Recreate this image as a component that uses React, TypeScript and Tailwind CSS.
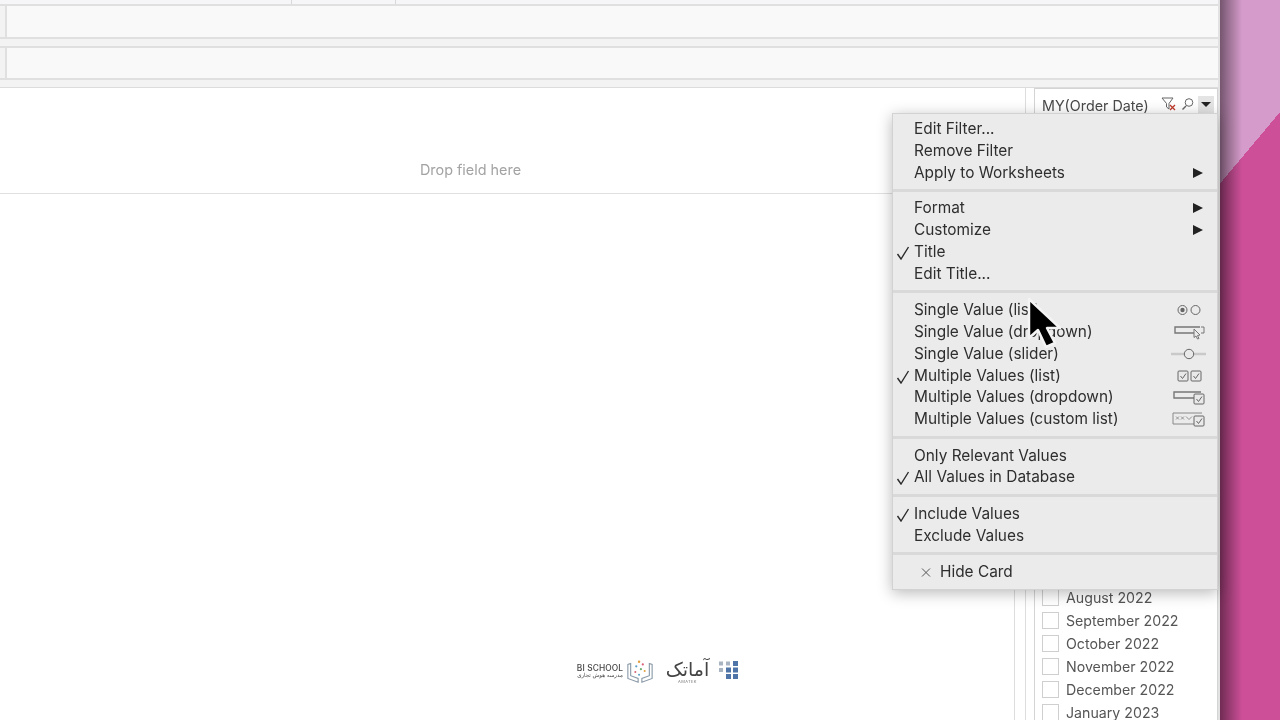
import type { ReactNode } from 'react'

const months = ['August 2022', 'September 2022', 'October 2022', 'November 2022', 'December 2022', 'January 2023']

function Box({ x, y, s = 10 }: { x: number; y: number; s?: number }) {
  return (
    <g>
      <rect x={x} y={y} width={s} height={s} rx="1" fill="#e9e9e9" stroke="#666" />
      <path d={`M${x + 2.5} ${y + s / 2}l2 2.5 3.5-5`} fill="none" stroke="#666" />
    </g>
  )
}

function ModeIcon({ kind }: { kind: string }) {
  return (
    <svg width="36" height="18" viewBox="0 0 36 18" className="absolute right-[10px] top-[2px]">
      {kind === 'radio' && (
        <g fill="none" stroke="#666">
          <circle cx="11.5" cy="9" r="4.5" />
          <circle cx="11.5" cy="9" r="2.2" fill="#666" stroke="none" />
          <circle cx="24.5" cy="9" r="4.5" />
        </g>
      )}
      {kind === 'drop' && (
        <g fill="none" stroke="#777">
          <path d="M29 4H4v6h20" strokeWidth="1.4" />
          <path d="M30 4h3v6h-3" />
          <path d="M23 6l6 6-2.5.5 1.5 3-1.5.5-1.5-3-2 1.5z" fill="#e9e9e9" />
        </g>
      )}
      {kind === 'slider' && (
        <g>
          <path d="M0 9h35" stroke="#c9c9c9" strokeWidth="2.5" />
          <circle cx="18" cy="9" r="4.7" fill="#e9e9e9" stroke="#666" />
        </g>
      )}
      {kind === 'checks' && (
        <g>
          <Box x={7} y={4} />
          <Box x={20} y={4} />
        </g>
      )}
      {kind === 'dropcheck' && (
        <g>
          <path d="M30 4H3v6h20" fill="none" stroke="#777" strokeWidth="1.4" />
          <Box x={23} y={6} />
        </g>
      )}
      {kind === 'custom' && (
        <g>
          <path d="M31 3H2v11h21" fill="none" stroke="#888" />
          <path d="M5 6.5l3 3m0-3l-3 3M10 6.5l3 3m0-3l-3 3M15 6.5l3 3 3-3" fill="none" stroke="#888" strokeWidth=".9" />
          <Box x={23} y={6} />
        </g>
      )}
    </svg>
  )
}

function Row({ label, check, arrow, mode }: { label: string; check?: boolean; arrow?: boolean; mode?: string }) {
  return (
    <div className="relative h-[21.8px] pl-[21px] leading-[21.8px] whitespace-nowrap">
      {check && (
        <svg width="14" height="14" viewBox="0 0 14 14" className="absolute left-[3px] top-[5px]">
          <path d="M1.5 8l3.5 5L12.5 1" fill="none" stroke="#2b2b2b" strokeWidth="1.4" />
        </svg>
      )}
      {label}
      {arrow && (
        <svg width="10" height="10" viewBox="0 0 10 10" className="absolute right-[14px] top-[6px]">
          <path d="M0 0l10 5-10 5z" fill="#222" />
        </svg>
      )}
      {mode && <ModeIcon kind={mode} />}
    </div>
  )
}

function Group({ children }: { children: ReactNode }) {
  return (
    <div className="border-b-[3px] border-[#d9d9d9] py-[5.8px] first:pt-[4.1px] first:pb-[5.1px] last:border-b-0 last:pb-[6px]">
      {children}
    </div>
  )
}

function Shelf({ className }: { className: string }) {
  return (
    <div className={`flex border-y-2 border-[#e0e0e0] bg-[#f9f9f9] ${className}`}>
      <div className="w-[7px] border-r-2 border-[#e0e0e0] bg-[#f3f3f3]" />
    </div>
  )
}

export default function App() {
  return (
    <div className="relative flex h-[720px] w-[1280px] overflow-hidden bg-white font-['Inter',sans-serif] blur-[0.35px]">
      {/* app window */}
      <div className="flex w-[1220px] flex-col border-r-2 border-[#e2e2e2] bg-[#f3f3f3]">
        <div className="flex h-[4px] bg-[#f6f6f8]">
          <div className="w-[292px] border-r border-[#d8d8d8]" />
          <div className="w-[104px] border-r border-[#d8d8d8]" />
        </div>
        <Shelf className="h-[35px]" />
        <div className="h-[7px]" />
        <Shelf className="h-[34px]" />
        <div className="h-[7px]" />

        <div className="flex min-h-0 flex-1 border-t border-[#dcdcdc] bg-white">
          <div className="flex w-[1026px] flex-col border-r border-[#dddddd]">
            <div className="flex h-[106px] shrink-0 items-center justify-center border-b border-[#e0e0e0] pt-[58px] pr-[84px] text-[14.4px] text-[#a3a3a3]">
              Drop field here
            </div>
            <div className="w-[1015px] flex-1 border-r border-[#dddddd]" />
          </div>

          <div className="ml-[8px] w-[184px] border-x border-t border-[#d4d4d4] pl-[7px] text-[#555]">
            <div className="flex h-[34px] items-center text-[14.3px] text-[#4a4a4a]">MY(Order Date)</div>
            <div className="mt-[463px] flex flex-col">
              {months.map((m) => (
                <div key={m} className="flex h-[23px] items-center gap-[7px] text-[14.2px] whitespace-nowrap">
                  <div className="h-[17px] w-[17px] shrink-0 border border-[#cfcfcf] bg-white" />
                  {m}
                </div>
              ))}
            </div>
          </div>
        </div>
      </div>

      {/* desktop wallpaper */}
      <div className="relative flex-1 bg-[linear-gradient(130deg,#d59bca_118px,#cc4f98_118px)]">
        <div className="h-full w-[22px] bg-gradient-to-r from-black/45 to-transparent" />
      </div>

      {/* card header icons */}
      <svg width="60" height="18" viewBox="0 0 60 18" className="absolute left-[1160px] top-[96px]">
        <path d="M2 2h11L9 7.5V13L6.5 11V7.5z" fill="none" stroke="#666" />
        <path d="M10 9l5 5m0-5l-5 5" stroke="#c0392b" strokeWidth="1.3" />
        <circle cx="29" cy="6.5" r="3.8" fill="none" stroke="#666" />
        <path d="M26 10l-3.5 3.5" stroke="#666" strokeWidth="1.4" />
      </svg>
      <div className="absolute left-[1198px] top-[96px] flex h-[17px] w-[16px] items-center justify-center bg-[#e4e4e4]">
        <div className="h-0 w-0 border-x-[5px] border-t-[5px] border-x-transparent border-t-[#222]" />
      </div>

      {/* filter card menu */}
      <div className="absolute left-[892px] top-[113px] w-[326px] border border-[#d2d2d2] bg-[#ebebeb] text-[15.4px] text-[#2e2e2e] shadow-[0_3px_14px_rgba(0,0,0,0.28)]">
        <Group>
          <Row label="Edit Filter..." />
          <Row label="Remove Filter" />
          <Row label="Apply to Worksheets" arrow />
        </Group>
        <Group>
          <Row label="Format" arrow />
          <Row label="Customize" arrow />
          <Row label="Title" check />
          <Row label="Edit Title..." />
        </Group>
        <Group>
          <Row label="Single Value (list)" mode="radio" />
          <Row label="Single Value (dropdown)" mode="drop" />
          <Row label="Single Value (slider)" mode="slider" />
          <Row label="Multiple Values (list)" check mode="checks" />
          <Row label="Multiple Values (dropdown)" mode="dropcheck" />
          <Row label="Multiple Values (custom list)" mode="custom" />
        </Group>
        <Group>
          <Row label="Only Relevant Values" />
          <Row label="All Values in Database" check />
        </Group>
        <Group>
          <Row label="Include Values" check />
          <Row label="Exclude Values" />
        </Group>
        <Group>
          <div className="flex h-[21.8px] items-center gap-[9px] pl-[28px]">
            <svg width="10" height="10" viewBox="0 0 10 10">
              <path d="M1 1.5l8 8m0-8l-8 8" stroke="#555" />
            </svg>
            Hide Card
          </div>
        </Group>
      </div>

      {/* mouse pointer */}
      <svg width="40" height="58" viewBox="0 0 40 58" className="absolute left-[1024px] top-[295px]">
        <path
          d="M5 4v39l9-8 8 17 9-4-8-15h13z"
          fill="#000"
          stroke="#f4f4f4"
          strokeWidth="2.5"
          strokeLinejoin="round"
        />
      </svg>

      {/* watermark logos */}
      <div className="absolute left-[577px] top-[657px] flex h-[28px] items-center">
        <div className="flex w-[46px] flex-col items-center leading-none text-[#444]">
          <span className="text-[8.4px] font-medium tracking-[0.1px] whitespace-nowrap">BI SCHOOL</span>
          <span className="mt-[1px] font-['DejaVu_Sans',sans-serif] text-[5.5px] whitespace-nowrap">مدرسه هوش تجاری</span>
        </div>
        <svg width="28" height="28" viewBox="0 0 30 28" className="ml-[3px]">
          <path d="M2 7v15l11 4V22L5 19V6zM28 7v15l-11 4V22l8-3V6z" fill="none" stroke="#8a9aa8" strokeWidth="1.2" />
          <circle cx="14" cy="4" r="1.3" fill="#e0a040" />
          <circle cx="18" cy="7" r="1.2" fill="#d9607a" />
          <circle cx="11" cy="9" r="1.2" fill="#5aa0c8" />
          <circle cx="16" cy="12" r="1.2" fill="#70b070" />
          <circle cx="20" cy="14" r="1.1" fill="#e0a040" />
          <circle cx="10" cy="15" r="1.1" fill="#d9607a" />
          <circle cx="14" cy="18" r="1.1" fill="#5aa0c8" />
        </svg>
        <div className="ml-[13px] flex w-[41px] flex-col items-center leading-none">
          <span className="font-['DejaVu_Sans',sans-serif] text-[19px] leading-[22px] text-[#444]">آماتک</span>
          <span className="text-[4px] tracking-widest text-[#777]">AMATEK</span>
        </div>
        <svg width="20" height="18" viewBox="0 0 20 18" className="mb-[3px] ml-[11px]">
          <g fill="#4f74a8">
            <rect x="14" y="0" width="5" height="5" />
            <rect x="7" y="6.5" width="5" height="5" />
            <rect x="14" y="6.5" width="5" height="5" />
            <rect x="7" y="13" width="5" height="5" />
            <rect x="14" y="13" width="5" height="5" />
          </g>
          <g fill="#a9b4c2">
            <rect x="0" y="0.5" width="4" height="4" />
            <rect x="7" y="0.5" width="4" height="4" />
            <rect x="0" y="7" width="4" height="4" />
          </g>
        </svg>
      </div>
    </div>
  )
}
